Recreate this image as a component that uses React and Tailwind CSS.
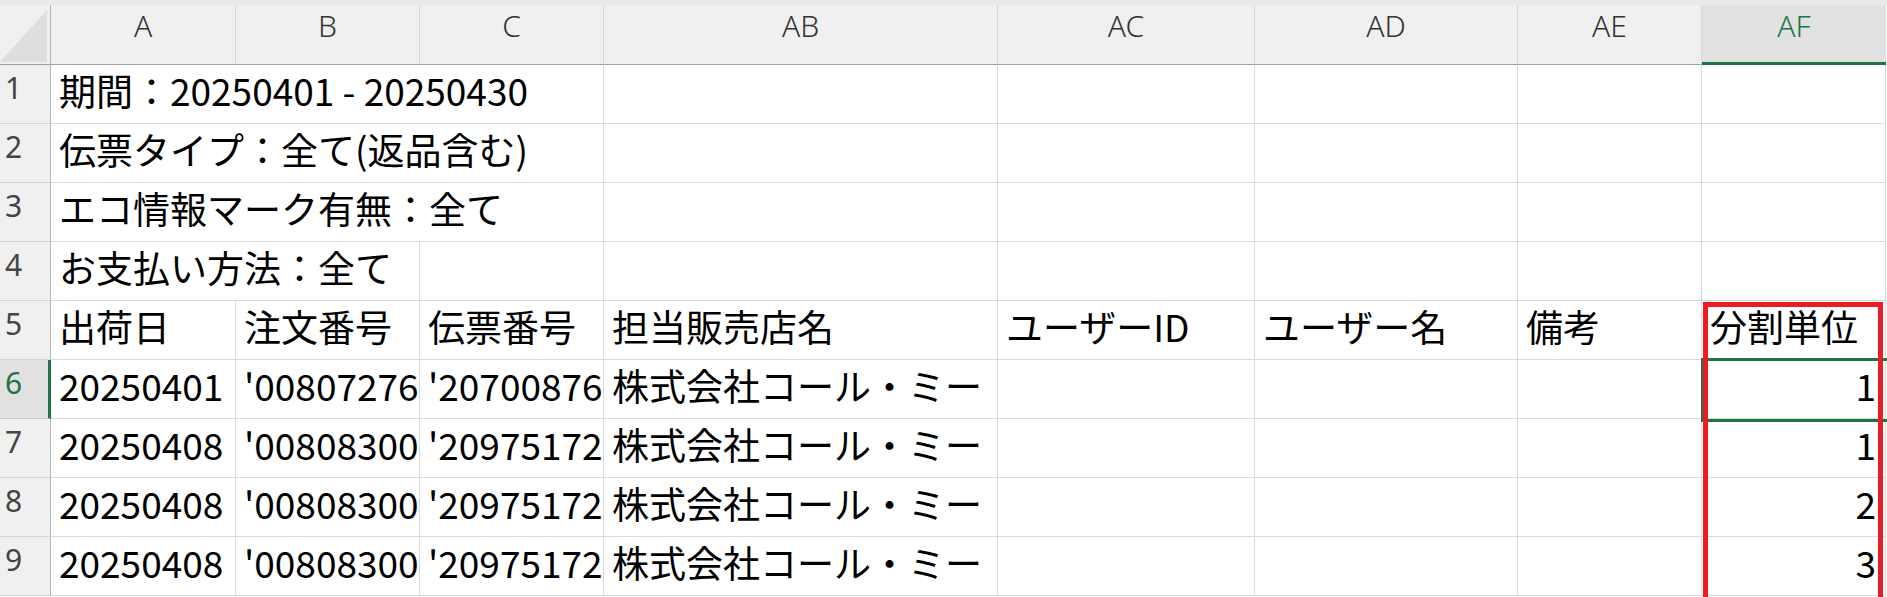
import React from 'react';

const cols = ['A', 'B', 'C', 'AB', 'AC', 'AD', 'AE', 'AF'];

const headRow = ['出荷日', '注文番号', '伝票番号', '担当販売店名', 'ユーザーID', 'ユーザー名', '備考', '分割単位'];

const dataRows = [
    ['20250401', "'00807276", "'20700876", '株式会社コール・ミー', 1],
    ['20250408', "'00808300", "'20975172", '株式会社コール・ミー', 1],
    ['20250408', "'00808300", "'20975172", '株式会社コール・ミー', 2],
    ['20250408', "'00808300", "'20975172", '株式会社コール・ミー', 3],
];

// shared cell look
const cell = 'h-[59px] border-r border-b border-[#dadada] pt-[7px] pl-[8px] whitespace-nowrap text-[37px] leading-none text-black';

function RowHead({ n, active }) {
    return (
        <div
            className={
                active
                    ? 'h-[59px] border-b border-[#c8c8c8] border-r-[3px] border-r-[#217346] bg-[#e1e1e1] pl-[5px] pt-[8px] text-[30px] leading-none text-[#217346] font-["Noto_Sans",sans-serif]'
                    : 'h-[59px] border-b border-[#d4d4d4] border-r border-r-[#b4b4b4] bg-[#f0f0f0] pl-[5px] pt-[8px] text-[30px] leading-none text-[#444444] font-["Noto_Sans",sans-serif]'
            }
        >
            {n}
        </div>
    );
}

function App() {
    const info = [
        ['期間：20250401 - 20250430', 3],
        ['伝票タイプ：全て(返品含む)', 3],
        ['エコ情報マーク有無：全て', 3],
        ['お支払い方法：全て', 2],
    ];

    return (
        <div className="relative w-[1887px] h-[597px] overflow-hidden bg-white font-['Noto_Sans_CJK_JP',sans-serif]">
            <div className="h-[5px] bg-[#ede8ee]" />

            <div className="grid grid-cols-[51px_185px_184px_184px_394px_257px_263px_184px_184px]">
                {/* column headers */}
                <div className="relative h-[60px] bg-[#f0f0f0] border-r border-r-[#b4b4b4] border-b border-b-[#a0a0a0]">
                    <svg className="absolute left-0 top-[5px]" width="47" height="52" viewBox="0 0 47 52">
                        <polygon points="47,0 47,52 0,52" fill="#dedede" />
                    </svg>
                </div>
                {cols.map(c => (
                    <div
                        key={c}
                        className={
                            c === 'AF'
                                ? 'h-[60px] bg-[#e1e1e1] border-b-[3px] border-b-[#217346] text-center pt-[6px] text-[30px] leading-none font-light text-[#217346] font-["Noto_Sans",sans-serif]'
                                : 'h-[60px] bg-[#f0f0f0] border-r border-r-[#d6d6d6] border-b border-b-[#a0a0a0] text-center pt-[6px] text-[30px] leading-none font-light text-[#333333] font-["Noto_Sans",sans-serif]'
                        }
                    >
                        {c}
                    </div>
                ))}

                {/* rows 1-4: text spilling over neighbour cells */}
                {info.map(([text, span], i) => (
                    <React.Fragment key={i}>
                        <RowHead n={i + 1} />
                        <div className={cell + (span === 3 ? ' col-span-3' : ' col-span-2')}>{text}</div>
                        {span === 2 && <div className={cell} />}
                        {[0, 1, 2, 3, 4].map(k => (
                            <div key={k} className={cell} />
                        ))}
                    </React.Fragment>
                ))}

                {/* row 5 */}
                <RowHead n={5} />
                {headRow.map(h => (
                    <div key={h} className={cell}>{h}</div>
                ))}

                {/* rows 6-9 */}
                {dataRows.map((r, i) => (
                    <React.Fragment key={i}>
                        <RowHead n={i + 6} active={i === 0} />
                        <div className={cell}>{r[0]}</div>
                        <div className={cell}>{r[1]}</div>
                        <div className={cell}>{r[2]}</div>
                        <div className={cell + ' pl-[7px]'}>{r[3]}</div>
                        <div className={cell} />
                        <div className={cell} />
                        <div className={cell} />
                        <div className={cell + ' text-right pr-[9px]'}>{r[4]}</div>
                    </React.Fragment>
                ))}
            </div>

            {/* active cell AF6 */}
            <div className="absolute left-[1701px] top-[358px] w-[200px] h-[64px] border-[3px] border-[#217346]" />
            {/* red highlight around AF5:AF9 */}
            <div className="absolute left-[1703px] top-[302px] w-[180px] h-[310px] border-[5px] border-[#ec1c24]" />
        </div>
    );
}

export default App;
